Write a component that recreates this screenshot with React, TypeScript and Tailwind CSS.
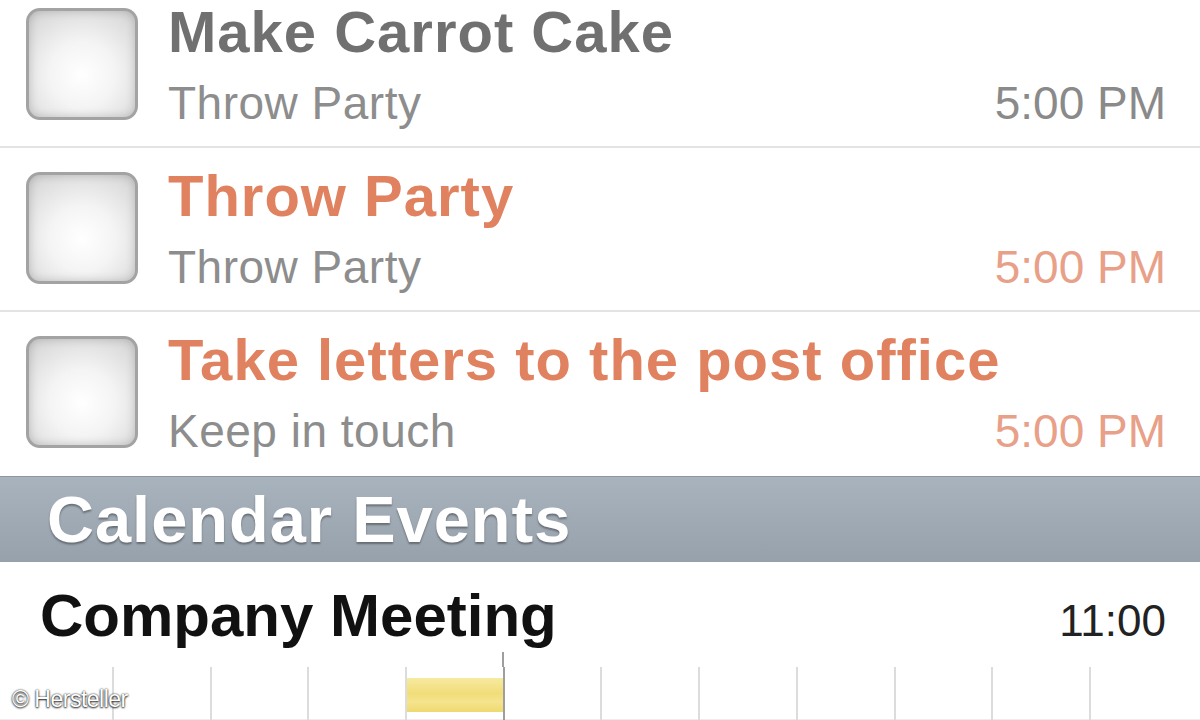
import React from "react";

type Task = {
  title: string;
  list: string;
  time: string;
  overdue?: boolean;
};

const tasks: Task[] = [
  { title: "Make Carrot Cake", list: "Throw Party", time: "5:00 PM" },
  { title: "Throw Party", list: "Throw Party", time: "5:00 PM", overdue: true },
  { title: "Take letters to the post office", list: "Keep in touch", time: "5:00 PM", overdue: true },
];

function CheckBox() {
  return (
    <div className="mt-[24px] ml-[26px] h-[112px] w-[112px] shrink-0 rounded-[14px] border-[3px] border-[#a3a3a3] bg-[radial-gradient(circle_at_50%_60%,#ffffff_0%,#f4f4f4_40%,#d2d2d2_100%)] shadow-[inset_0_0_10px_rgba(0,0,0,0.18)]" />
  );
}

function TaskRow({ task, last }: { task: Task; last?: boolean }) {
  return (
    <div
      className={
        last
          ? "flex h-[164px] items-start"
          : "flex h-[164px] items-start border-b-2 border-[#e3e3e3]"
      }
    >
      <CheckBox />
      <div className="ml-[30px] mr-[34px] flex min-w-0 flex-1 flex-col pt-[19px]">
        <div
          className={
            task.overdue
              ? "text-[58px] leading-[58px] font-bold tracking-[1px] text-[#e0825f] whitespace-nowrap"
              : "text-[58px] leading-[58px] font-bold tracking-[1px] text-[#707070] whitespace-nowrap"
          }
        >
          {task.title}
        </div>
        <div className="mt-[19px] flex items-baseline justify-between text-[46px] leading-[46px]">
          <span className="tracking-[0.5px] text-[#8d8d8d]">{task.list}</span>
          <span className={task.overdue ? "text-[#e8a088]" : "text-[#8a8a8a]"}>{task.time}</span>
        </div>
      </div>
    </div>
  );
}

export default function App() {
  const ticks = Array.from({ length: 11 }, (_, i) => i);

  return (
    <div className="relative h-[720px] w-[1200px] overflow-hidden bg-white [font-family:'Liberation_Sans',Arial,sans-serif]">
      <div className="mt-[-16px]">
        {tasks.map((t, i) => (
          <TaskRow key={i} task={t} last={i === tasks.length - 1} />
        ))}
      </div>

      {/* section header */}
      <div className="flex h-[86px] items-center border-t border-[#8c96a0] bg-[linear-gradient(#a9b3bd,#97a1ab)] pl-[47px]">
        <span className="text-[65px] leading-[65px] font-bold tracking-[1px] text-white [text-shadow:0_2px_2px_rgba(0,0,0,0.35)]">
          Calendar Events
        </span>
      </div>

      {/* event */}
      <div className="flex items-baseline justify-between pt-[24px] pl-[40px] pr-[34px]">
        <span className="text-[60px] leading-[60px] font-bold text-[#111]">Company Meeting</span>
        <span className="text-[44px] leading-[44px] text-[#222]">11:00</span>
      </div>

      {/* timeline */}
      <div className="absolute left-0 right-0 top-[652px] h-[68px] border-b border-[#ececec]">
        <div className="ml-[112px] mt-[15px] flex h-[53px]">
          {ticks.map((i) => (
            <div
              key={i}
              className={
                i === 4
                  ? "relative w-[97.7px] shrink-0 border-l-2 border-[#9e9e9e]"
                  : "relative w-[97.7px] shrink-0 border-l-2 border-[#dcdcdc]"
              }
            >
              {i === 3 && (
                <div className="absolute left-0 top-[11px] h-[34px] w-[97px] bg-[linear-gradient(#f6eaa0,#f1dd78_45%,#f5e48e_70%,#efd970)]" />
              )}
            </div>
          ))}
        </div>
        <div className="absolute left-[502px] top-0 h-[15px] border-l-2 border-[#9e9e9e]" />
      </div>

      {/* credit */}
      <div className="absolute left-[12px] bottom-[9px] text-[23px] leading-[23px] tracking-[-0.5px] text-white [text-shadow:0_0_2px_rgba(0,0,0,0.9),0_1px_2px_rgba(0,0,0,0.8)]">
        © Hersteller
      </div>
    </div>
  );
}
